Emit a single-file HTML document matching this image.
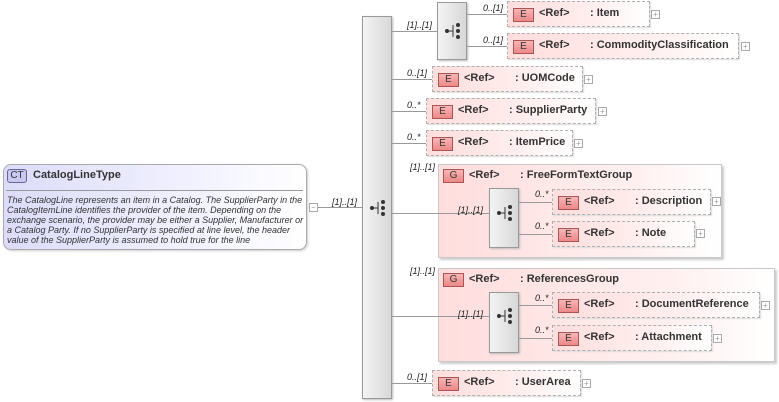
<!DOCTYPE html>
<html><head><meta charset="utf-8"><style>
*{margin:0;padding:0;box-sizing:border-box}
body{width:779px;height:402px;background:#fff;position:relative;overflow:hidden;font-family:"Liberation Sans",sans-serif;color:#222}
.a{position:absolute}
.ln{position:absolute;background:#999;height:1px}
.lab{position:absolute;font-size:9px;font-style:italic;color:#222}
.el{position:absolute;height:26px;border:1px dashed #b0b0b0;background:linear-gradient(to right,#fdd 0%,#fee 60%,#fff 100%);box-shadow:1px 1px 1px #ddd}
.bd{position:absolute;left:5px;top:6px;width:21px;height:14px;border:1px solid #a55;background:linear-gradient(#f7b5b5,#e88);font-size:10px;text-align:center;line-height:12px;color:#333}
.rf{position:absolute;left:31px;top:5px;font-size:11px;font-weight:bold;color:#333}
.nm{position:absolute;left:82px;top:5px;font-size:11px;font-weight:bold;color:#333;white-space:nowrap}
.pl{position:absolute;width:9px;height:9px;border:1px solid #aaa;background:#fff;font-size:8px;line-height:7px;text-align:center;color:#999}
.sq{position:absolute;border:1px solid #999;background:linear-gradient(to right,#f3f3f3,#d8d8d8);box-shadow:1px 1px 2px #bbb}
.gr{position:absolute;border:1px solid #c8c8c8;background:linear-gradient(to right,#fdd,#fff0f0 70%,#fff);box-shadow:2px 2px 2px #ccc}
</style></head><body>

<div class="a" style="left:3px;top:164px;width:304px;height:86px;border:1px solid #aaa;border-radius:8px;background:linear-gradient(to right,#dcdcfa,#f4f4ff 70%,#fff);box-shadow:1px 1px 2px #ccc"></div>
<div class="a" style="left:7px;top:169px;width:20px;height:14px;border:1px solid #669;border-radius:3px;background:#c8c8f0;font-size:10px;text-align:center;line-height:12px;color:#333">CT</div>
<div class="a" style="left:33px;top:169px;font-size:11px;font-weight:bold;color:#333">CatalogLineType</div>
<div class="a" style="left:6px;top:190px;width:297px;height:1px;background:#999"></div>
<div class="a" style="left:7px;top:195px;width:302px;font-size:9px;font-style:italic;line-height:10px;color:#333">The CatalogLine represents an item in a Catalog. The SupplierParty in the CatalogItemLine identifies the provider of the item. Depending on the exchange scenario, the provider may be either a Supplier, Manufacturer or a Catalog Party. If no SupplierParty is specified at line level, the header value of the SupplierParty is assumed to hold true for the line</div>
<div class="pl" style="left:309px;top:203px">−</div>
<div class="ln" style="left:318px;top:207px;width:44px"></div>
<div class="lab" style="left:332px;top:197px">[1]..[1]</div>

<div class="sq" style="left:362px;top:16px;width:30px;height:383px"></div>
<svg class="a" style="left:368px;top:199px" width="20" height="18"><circle cx="4" cy="9" r="2" fill="#333"/><line x1="4" y1="9" x2="10" y2="9" stroke="#333"/><line x1="10" y1="3" x2="10" y2="15" stroke="#333"/><circle cx="15" cy="3" r="2" fill="#333"/><circle cx="15" cy="9" r="2" fill="#333"/><circle cx="15" cy="15" r="2" fill="#333"/></svg>

<div class="ln" style="left:392px;top:31px;width:45px"></div>
<div class="lab" style="left:407px;top:20px">[1]..[1]</div>
<div class="sq" style="left:437px;top:2px;width:30px;height:58px"></div>
<svg class="a" style="left:443px;top:22px" width="20" height="18"><circle cx="4" cy="9" r="2" fill="#333"/><line x1="4" y1="9" x2="10" y2="9" stroke="#333"/><line x1="10" y1="3" x2="10" y2="15" stroke="#333"/><circle cx="15" cy="3" r="2" fill="#333"/><circle cx="15" cy="9" r="2" fill="#333"/><circle cx="15" cy="15" r="2" fill="#333"/></svg>
<div class="ln" style="left:467px;top:14px;width:40px"></div>
<div class="lab" style="left:483px;top:3px">0..[1]</div>
<div class="el" style="left:507px;top:1px;width:143px"><div class="bd">E</div><div class="rf">&lt;Ref&gt;</div><div class="nm">: Item</div></div>
<div class="pl" style="left:651px;top:10px">+</div>
<div class="ln" style="left:467px;top:46px;width:40px"></div>
<div class="lab" style="left:483px;top:35px">0..[1]</div>
<div class="el" style="left:507px;top:33px;width:232px"><div class="bd">E</div><div class="rf">&lt;Ref&gt;</div><div class="nm">: CommodityClassification</div></div>
<div class="pl" style="left:741px;top:42px">+</div>

<div class="ln" style="left:392px;top:79px;width:40px"></div>
<div class="lab" style="left:407px;top:68px">0..[1]</div>
<div class="el" style="left:432px;top:66px;width:151px"><div class="bd">E</div><div class="rf">&lt;Ref&gt;</div><div class="nm">: UOMCode</div></div>
<div class="pl" style="left:584px;top:75px">+</div>

<div class="ln" style="left:392px;top:111px;width:34px"></div>
<div class="lab" style="left:407px;top:100px">0..*</div>
<div class="el" style="left:426px;top:98px;width:170px"><div class="bd">E</div><div class="rf">&lt;Ref&gt;</div><div class="nm">: SupplierParty</div></div>
<div class="pl" style="left:598px;top:107px">+</div>

<div class="ln" style="left:392px;top:143px;width:34px"></div>
<div class="lab" style="left:407px;top:132px">0..*</div>
<div class="el" style="left:426px;top:130px;width:147px"><div class="bd">E</div><div class="rf">&lt;Ref&gt;</div><div class="nm">: ItemPrice</div></div>
<div class="pl" style="left:574px;top:139px">+</div>

<div class="lab" style="left:410px;top:162px">[1]..[1]</div>
<div class="gr" style="left:438px;top:164px;width:284px;height:94px"></div>
<div class="bd" style="left:443px;top:169px">G</div>
<div class="a" style="left:469px;top:169px;font-size:11px;font-weight:bold;color:#333">&lt;Ref&gt;</div>
<div class="a" style="left:520px;top:169px;font-size:11px;font-weight:bold;color:#333">: FreeFormTextGroup</div>
<div class="ln" style="left:392px;top:213px;width:97px"></div>
<div class="lab" style="left:458px;top:205px">[1]..[1]</div>
<div class="sq" style="left:489px;top:188px;width:30px;height:60px"></div>
<svg class="a" style="left:495px;top:204px" width="20" height="18"><circle cx="4" cy="9" r="2" fill="#333"/><line x1="4" y1="9" x2="10" y2="9" stroke="#333"/><line x1="10" y1="3" x2="10" y2="15" stroke="#333"/><circle cx="15" cy="3" r="2" fill="#333"/><circle cx="15" cy="9" r="2" fill="#333"/><circle cx="15" cy="15" r="2" fill="#333"/></svg>
<div class="ln" style="left:519px;top:202px;width:33px"></div>
<div class="lab" style="left:535px;top:189px">0..*</div>
<div class="el" style="left:552px;top:189px;width:159px"><div class="bd">E</div><div class="rf">&lt;Ref&gt;</div><div class="nm">: Description</div></div>
<div class="pl" style="left:712px;top:197px">+</div>
<div class="ln" style="left:519px;top:234px;width:33px"></div>
<div class="lab" style="left:535px;top:221px">0..*</div>
<div class="el" style="left:552px;top:221px;width:143px"><div class="bd">E</div><div class="rf">&lt;Ref&gt;</div><div class="nm">: Note</div></div>
<div class="pl" style="left:696px;top:229px">+</div>

<div class="lab" style="left:410px;top:266px">[1]..[1]</div>
<div class="gr" style="left:438px;top:268px;width:337px;height:94px"></div>
<div class="bd" style="left:443px;top:273px">G</div>
<div class="a" style="left:469px;top:273px;font-size:11px;font-weight:bold;color:#333">&lt;Ref&gt;</div>
<div class="a" style="left:520px;top:273px;font-size:11px;font-weight:bold;color:#333">: ReferencesGroup</div>
<div class="ln" style="left:392px;top:316px;width:97px"></div>
<div class="lab" style="left:458px;top:309px">[1]..[1]</div>
<div class="sq" style="left:489px;top:292px;width:30px;height:61px"></div>
<svg class="a" style="left:495px;top:307px" width="20" height="18"><circle cx="4" cy="9" r="2" fill="#333"/><line x1="4" y1="9" x2="10" y2="9" stroke="#333"/><line x1="10" y1="3" x2="10" y2="15" stroke="#333"/><circle cx="15" cy="3" r="2" fill="#333"/><circle cx="15" cy="9" r="2" fill="#333"/><circle cx="15" cy="15" r="2" fill="#333"/></svg>
<div class="ln" style="left:519px;top:305px;width:33px"></div>
<div class="lab" style="left:535px;top:293px">0..*</div>
<div class="el" style="left:552px;top:292px;width:208px"><div class="bd">E</div><div class="rf">&lt;Ref&gt;</div><div class="nm">: DocumentReference</div></div>
<div class="pl" style="left:761px;top:301px">+</div>
<div class="ln" style="left:519px;top:338px;width:33px"></div>
<div class="lab" style="left:535px;top:325px">0..*</div>
<div class="el" style="left:552px;top:325px;width:160px"><div class="bd">E</div><div class="rf">&lt;Ref&gt;</div><div class="nm">: Attachment</div></div>
<div class="pl" style="left:713px;top:334px">+</div>

<div class="ln" style="left:392px;top:383px;width:40px"></div>
<div class="lab" style="left:407px;top:372px">0..[1]</div>
<div class="el" style="left:432px;top:370px;width:149px"><div class="bd">E</div><div class="rf">&lt;Ref&gt;</div><div class="nm">: UserArea</div></div>
<div class="pl" style="left:582px;top:379px">+</div>
</body></html>
